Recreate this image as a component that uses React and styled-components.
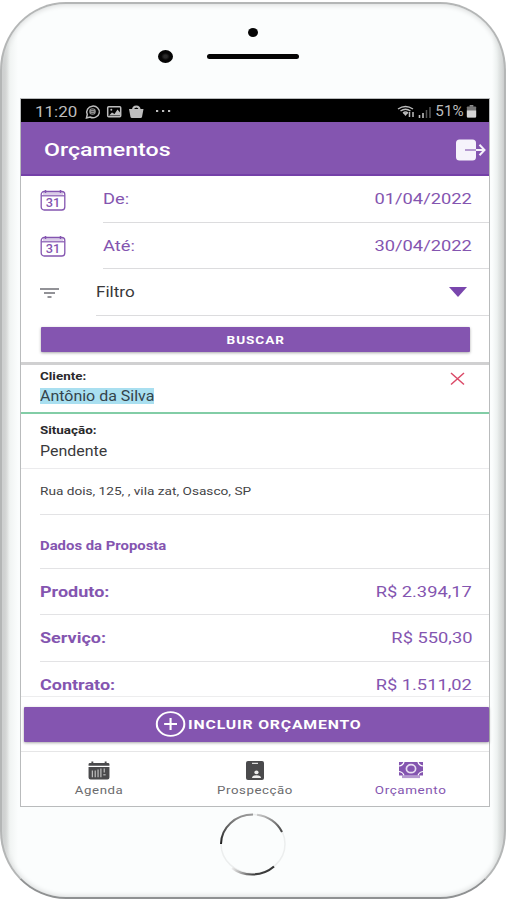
import styled, { createGlobalStyle, css } from 'styled-components'

const purple = '#8455b0'

const GlobalStyle = createGlobalStyle`
  * {
    box-sizing: border-box;
  }

  body {
    margin: 0;
    background: #fff;
    overflow: hidden;
    font-family: Roboto, 'Liberation Sans', sans-serif;
  }
`

const Phone = styled.main`
  width: 506px;
  height: 897px;
  margin-top: 2px;
  display: flex;
  flex-direction: column;
  align-items: center;
  background: linear-gradient(
    90deg,
    #bfc1c1 0,
    #d5d8d7 4px,
    #f1f4f3 8px,
    #fbfdfd 16px,
    #fbfdfd 490px,
    #edf1f0 495px,
    #d5d8d7 500px,
    #b9bbbb 502px
  );
  border: 2px solid #b4b6b6;
  border-bottom-color: #8f9192;
  border-radius: 66px / 68px;
  box-shadow: inset 0 0 5px 1px #d9dbdb;
`

const PhoneTop = styled.div`
  height: 95px;
  flex: none;
  width: 100%;
  display: flex;
  flex-direction: column;
  align-items: center;
`

const Sensor = styled.span`
  width: 10px;
  height: 9px;
  margin-top: 24px;
  border-radius: 50%;
  background: #050505;
`

const SpeakerRow = styled.div`
  display: flex;
  align-items: center;
  gap: 34px;
  margin-top: 13px;
  padding-right: 49px;
`

const Camera = styled.span`
  width: 15px;
  height: 13px;
  border-radius: 50%;
  background: radial-gradient(#2b2b2b 0 15%, #050505 40%);
`

const Speaker = styled.span`
  width: 92px;
  height: 5px;
  border-radius: 3px;
  background: #050505;
`

const Screen = styled.section`
  width: 468px;
  height: 707px;
  flex: none;
  margin-left: 4px;
  display: flex;
  flex-direction: column;
  background: #fff;
  box-shadow: 0 0 0 1px #b9bbbc;
`

const Text = styled.span`
  display: inline-block;
  flex: none;
  margin: 0;
  white-space: nowrap;
  font-size: ${({ $size }) => $size || 15}px;
  font-weight: ${({ $weight }) => $weight || 400};
  letter-spacing: ${({ $spacing }) => $spacing || 0}px;
  line-height: 18px;
  color: ${({ $color }) => $color || 'inherit'};
  transform: scaleX(${({ $stretch }) => $stretch || 1.22});
  transform-origin: ${({ $origin }) => $origin || 'left'} center;
`

const StatusBar = styled.div`
  height: 23px;
  flex: none;
  display: flex;
  align-items: center;
  justify-content: space-between;
  padding: 2px 12px 0 14px;
  background: #000;
  color: #bdbdbd;
`

const StatusGroup = styled.div`
  display: flex;
  align-items: center;
  gap: ${({ $gap }) => $gap}px;
`

const Header = styled.header`
  height: 54px;
  flex: none;
  display: flex;
  align-items: center;
  justify-content: space-between;
  padding: 3px 2px 0 23px;
  background: ${purple};
  border-bottom: 2px solid #7440a8;
  color: #fff;
`

const Field = styled.div`
  height: ${({ $height }) => $height}px;
  flex: none;
  display: flex;
  padding-left: 19px;
  color: ${({ $color }) => $color || purple};
`

const FieldIcon = styled.div`
  width: ${({ $width }) => $width}px;
  display: flex;
  align-items: center;
`

const FieldBody = styled.div`
  flex: 1;
  display: flex;
  align-items: center;
  justify-content: space-between;
  padding-right: 17px;
  border-bottom: 1px solid #dcdcde;
`

const SearchArea = styled.div`
  height: 49px;
  flex: none;
  padding: 11px 19px 0 20px;
  border-bottom: 3px solid #d0d0d1;
`

const Button = styled.button`
  width: 100%;
  height: ${({ $height }) => $height}px;
  display: flex;
  align-items: center;
  justify-content: center;
  padding: 0;
  border: 0;
  border-radius: 1px;
  background: ${purple};
  box-shadow: 0 1px 3px rgba(0, 0, 0, 0.35);
  color: #fff;
  font-family: inherit;
`

const Block = styled.div`
  height: ${({ $height }) => $height}px;
  flex: none;
  display: flex;
  justify-content: space-between;
  padding: 3px 24px 0 19px;
  ${({ $client }) =>
    $client
      ? css`
          border-bottom: 2px solid #82cda6;
        `
      : css`
          padding-top: 8px;
          border-bottom: 1px solid #ebebed;
        `}
`

const BlockText = styled.div`
  display: flex;
  flex-direction: column;
  align-items: flex-start;
  gap: 2px;
`

const Highlight = styled(Text)`
  line-height: 16px;
  background: #a9dff0;
`

const Line = styled.div`
  height: ${({ $height }) => $height}px;
  flex: none;
  display: flex;
  align-items: center;
  justify-content: space-between;
  margin-left: 19px;
  padding: ${({ $top }) => $top || 0}px 17px 0 0;
  border-bottom: ${({ $last }) => ($last ? 0 : 1)}px solid #e3e3e5;
  color: ${({ $color }) => $color || purple};
`

const AddArea = styled.div`
  height: 56px;
  flex: none;
  padding: 10px 0 0 3px;
  border-top: 1px solid #ededee;
  border-bottom: 1px solid #e6e6e7;
`

const AddLabel = styled.span`
  display: flex;
  align-items: center;
  gap: 2px;
  padding: 0 0 1px 4px;
  transform: scaleX(1.17);
`

const Tabs = styled.nav`
  flex: 1;
  display: grid;
  grid-template-columns: repeat(3, 1fr);
`

const Tab = styled.div`
  display: flex;
  flex-direction: column;
  align-items: center;
  gap: 1px;
  padding-top: 9px;
  color: ${({ $active }) => ($active ? purple : '#6b6b6d')};

  svg {
    color: ${({ $active }) => ($active ? purple : '#4a4a4c')};
  }
`

const HomeButton = styled.svg`
  flex: none;
  margin-top: 6px;
`

function CalendarIcon() {
  return (
    <svg width="26" height="22" viewBox="0 0 26 22" fill="none" stroke="currentColor">
      <rect x="1.2" y="2.5" width="23.6" height="18.5" rx="3" strokeWidth="1.3" />
      <path d="M1.5 6.8h23" strokeWidth="1.2" />
      <path d="M3 4.6h20" strokeWidth="2.6" opacity=".3" />
      <path d="M5.5 1v3M20.5 1v3" strokeWidth="1.5" />
      <text x="13" y="17.6" textAnchor="middle" fontSize="12" fontWeight="500" fill="currentColor" stroke="none" textLength="14.5" lengthAdjust="spacingAndGlyphs">31</text>
    </svg>
  )
}

function StatusIcons() {
  return (
    <svg width="90" height="16" viewBox="0 0 90 16" fill="none" stroke="#bdbdbd">
      <path d="M1.500 14l.8-3.700A6.300 5.800 0 1 1 5 13z" strokeWidth="1.5" />
      <circle cx="7.500" cy="7.5" r="3.3" fill="#bdbdbd" stroke="none" opacity=".75" />
      <path d="M6.200 5.5h2.6M6.200 7.5h2.6M6.200 9.5h2.6" stroke="#333" strokeWidth=".7" />
      <rect x="22.7" y="2.7" width="13" height="10" rx="1" strokeWidth="1.5" />
      <path d="M24 11.5l3-3 2.5 1.5 3-4.5 2.5 3v3z" fill="#bdbdbd" stroke="none" />
      <circle cx="26.3" cy="5.8" r="1" fill="#bdbdbd" stroke="none" />
      <path d="M44 5h14.500l-1.500 8q-.3 1-1.400 1h-8.700q-1.100 0-1.400-1z" fill="#bdbdbd" stroke="none" />
      <path d="M48 6q0-3.500 3.300-3.500T54.600 6" strokeWidth="2" />
      <path d="M71 7h2.200M77 7h2.200M83 7h2.200" strokeWidth="2" />
    </svg>
  )
}

function SignalIcons() {
  return (
    <svg width="36" height="16" viewBox="0 0 36 16" fill="none" stroke="#bdbdbd">
      <path d="M1 5q7.500-5 15 0M3.500 7q5-3.500 10 0M6 9q2.500-2 5 0" strokeWidth="1.400" />
      <path d="M6 9l2.500 3 2.500-3z" fill="#bdbdbd" stroke="none" />
      <path d="M12.500 8v5M16 13V8" strokeWidth="1.500" />
      <path d="M22.500 11v3M26 9v5" strokeWidth="1.600" />
      <path d="M29.500 6v8M33 3v11" strokeWidth="1.500" stroke="#555" />
    </svg>
  )
}

function BatteryIcon() {
  return (
    <svg width="11" height="13" viewBox="0 0 11 14">
      <path d="M3.500 0h4v2h-4z" fill="#8b8b8b" />
      <rect x=".5" y="1.500" width="10" height="12" rx="1" fill="#777" />
      <path d="M.5 6h10v6.500q0 1-1 1h-8q-1 0-1-1z" fill="#d5d5d5" />
    </svg>
  )
}

function ExitIcon() {
  return (
    <svg width="32" height="24" viewBox="0 0 32 24" fill="none">
      <rect x="1" y="1.500" width="20" height="21" rx="3.500" fill="#f6f3fb" />
      <path d="M10 12h11" stroke="#a98bc7" strokeWidth="1.700" />
      <path d="M21 12h8M24.500 6.800l5 5.200-5 5.200" stroke="#f6f3fb" strokeWidth="2" />
    </svg>
  )
}

function AgendaIcon() {
  return (
    <svg width="22" height="19" viewBox="0 0 22 20" fill="currentColor">
      <path d="M0 5V3.500Q0 2 1.500 2H3V.5h2V2h12V.5h2V2h1.500Q22 2 22 3.500V5zM0 6.300h22v11q0 2.200-2.200 2.200H2.200Q0 19.500 0 17.300z" />
      <path d="M4 10v7M7 10v7M10 9v8M13 8v9M16.500 8v4" stroke="#c5c5c5" strokeWidth="1.200" />
      <path d="M15.500 14.500h2.500" stroke="#aaa" strokeWidth="1.500" />
    </svg>
  )
}

function ProspectIcon() {
  return (
    <svg width="18" height="19" viewBox="0 0 18 20" preserveAspectRatio="none">
      <rect width="18" height="20" rx="2" fill="currentColor" />
      <path d="M6 2.500h6" stroke="#ddd" strokeWidth="1.300" />
      <ellipse cx="10.500" cy="12" rx="2.100" ry="1.900" fill="#eee" />
      <path d="M6 18q0-3 4.500-3t4.500 3z" fill="#eee" />
    </svg>
  )
}

function MoneyIcon() {
  return (
    <svg width="26" height="19" viewBox="0 0 26 19" fill="none">
      <rect x="1" y="1" width="24" height="13.500" fill="currentColor" />
      <path d="M1 5q4-.5 5-4M1 10.500q4 .5 5 4M25 5q-4-.5-5-4M25 10.500q-4 .5-5 4" stroke="#fff" strokeWidth="1.200" />
      <ellipse cx="13" cy="7.700" rx="4.600" ry="4" stroke="#e8def1" strokeWidth="1.700" />
      <path d="M4 15.800h18" stroke="currentColor" strokeWidth="2.600" opacity=".6" />
    </svg>
  )
}

const totals = [
  { label: 'Produto:', value: 'R$ 2.394,17', height: 46 },
  { label: 'Serviço:', value: 'R$ 550,30', height: 47 },
  { label: 'Contrato:', value: 'R$ 1.511,02', height: 34, top: 11, last: true },
]

function DateField({ label, value, height }) {
  return (
    <Field $height={height}>
      <FieldIcon $width={63}>
        <CalendarIcon />
      </FieldIcon>
      <FieldBody>
        <Text>{label}</Text>
        <Text $origin="right">{value}</Text>
      </FieldBody>
    </Field>
  )
}

function App() {
  return (
    <>
      <GlobalStyle />
      <Phone>
        <PhoneTop>
          <Sensor />
          <SpeakerRow>
            <Camera />
            <Speaker />
          </SpeakerRow>
        </PhoneTop>
        <Screen>
          <StatusBar>
            <StatusGroup $gap={13}>
              <Text $stretch={1.13}>11:20</Text>
              <StatusIcons />
            </StatusGroup>
            <StatusGroup $gap={3}>
              <SignalIcons />
              <Text $origin="center" $stretch={1.05} $size={14.5}>51%</Text>
              <BatteryIcon />
            </StatusGroup>
          </StatusBar>
          <Header>
            <Text as="h1" $size={19} $weight={500}>Orçamentos</Text>
            <ExitIcon />
          </Header>

          <DateField label="De:" value="01/04/2022" height={47} />
          <DateField label="Até:" value="30/04/2022" height={46} />
          <Field $height={47} $color="#39393b">
            <FieldIcon $width={56}>
              <svg width="19" height="12" viewBox="0 0 19 12" stroke="#6f6f76" strokeWidth="1.400">
                <path d="M0 2h19M4 6h11M7.500 10h4" />
              </svg>
            </FieldIcon>
            <FieldBody>
              <Text $stretch={1.14}>Filtro</Text>
              <svg width="27" height="10" viewBox="0 0 27 10">
                <path d="M4 0h18l-9 10z" fill="#7946ad" />
              </svg>
            </FieldBody>
          </Field>
          <SearchArea>
            <Button $height={25}>
              <Text $size={11.5} $weight={700} $spacing={0.8} $stretch={1.18} $origin="center">BUSCAR</Text>
            </Button>
          </SearchArea>

          <Block $client $height={49}>
            <BlockText>
              <Text $size={11} $weight={700} $color="#29292b">Cliente:</Text>
              <Highlight $size={14} $stretch={1.14} $color="#33434b">Antônio da Silva</Highlight>
            </BlockText>
            <svg width="15" height="26" viewBox="0 0 15 26" stroke="#db4a68" strokeWidth="1.500">
              <path d="M1 5l13 11.500M14 5L1 16.500" />
            </svg>
          </Block>
          <Block $height={55}>
            <BlockText>
              <Text $size={11} $weight={700} $color="#29292b">Situação:</Text>
              <Text $size={14} $stretch={1.14} $color="#39393b">Pendente</Text>
            </BlockText>
          </Block>
          <Line $height={46} $color="#444446">
            <Text $size={11} $stretch={1.24}>Rua dois, 125, , vila zat, Osasco, SP</Text>
          </Line>
          <Line $height={54} $top={8}>
            <Text $size={12.2} $weight={700}>Dados da Proposta</Text>
          </Line>
          {totals.map(({ label, value, height, top, last }) => (
            <Line key={label} $height={height} $top={top} $last={last}>
              <Text $weight={700} $stretch={1.2}>{label}</Text>
              <Text $origin="right">{value}</Text>
            </Line>
          ))}

          <AddArea>
            <Button $height={35}>
              <AddLabel>
                <svg width="26" height="26" viewBox="0 0 26 26" fill="none" stroke="#fff" strokeWidth="1.800">
                  <circle cx="13" cy="13" r="11.800" />
                  <path d="M13 7v12M7.500 13h11" />
                </svg>
                <Text $size={13.5} $weight={700} $spacing={0.7} $stretch={1}>INCLUIR ORÇAMENTO</Text>
              </AddLabel>
            </Button>
          </AddArea>
          <Tabs>
            <Tab>
              <AgendaIcon />
              <Text $size={11.5} $spacing={0.5} $stretch={1.15} $origin="center">Agenda</Text>
            </Tab>
            <Tab>
              <ProspectIcon />
              <Text $size={11.5} $spacing={0.5} $stretch={1.15} $origin="center">Prospecção</Text>
            </Tab>
            <Tab $active>
              <MoneyIcon />
              <Text $size={11.5} $spacing={0.5} $stretch={1.17} $origin="center">Orçamento</Text>
            </Tab>
          </Tabs>
        </Screen>
        <HomeButton width="68" height="64" viewBox="0 0 68 64" fill="none">
          <defs>
            <linearGradient id="ringLeft" x1="0" y1="1" x2="0" y2="0">
              <stop offset="0" stopColor="#1e1e1e" />
              <stop offset=".5" stopColor="#555" />
              <stop offset="1" stopColor="#999" />
            </linearGradient>
            <linearGradient id="ringBottom" x1="0" y1="0" x2="1" y2="0">
              <stop offset="0" stopColor="#eee" />
              <stop offset=".5" stopColor="#444" />
              <stop offset="1" stopColor="#333" />
            </linearGradient>
            <linearGradient id="ringRight" x1="0" y1="0" x2="1" y2="1">
              <stop offset="0" stopColor="#ccc" />
              <stop offset="1" stopColor="#444" />
            </linearGradient>
          </defs>
          <ellipse cx="34" cy="32" rx="32" ry="29.500" stroke="#eceeee" strokeWidth="1.500" />
          <path d="M2 32A32 29.500 0 0 1 34 2.500" stroke="url(#ringLeft)" strokeWidth="2" />
          <path d="M38 2.700A32 29.500 0 0 1 63 20" stroke="url(#ringRight)" strokeWidth="2" />
          <path d="M13 56A32 29.500 0 0 0 55 54.500" stroke="url(#ringBottom)" strokeWidth="2.200" />
        </HomeButton>
      </Phone>
    </>
  )
}

export default App
